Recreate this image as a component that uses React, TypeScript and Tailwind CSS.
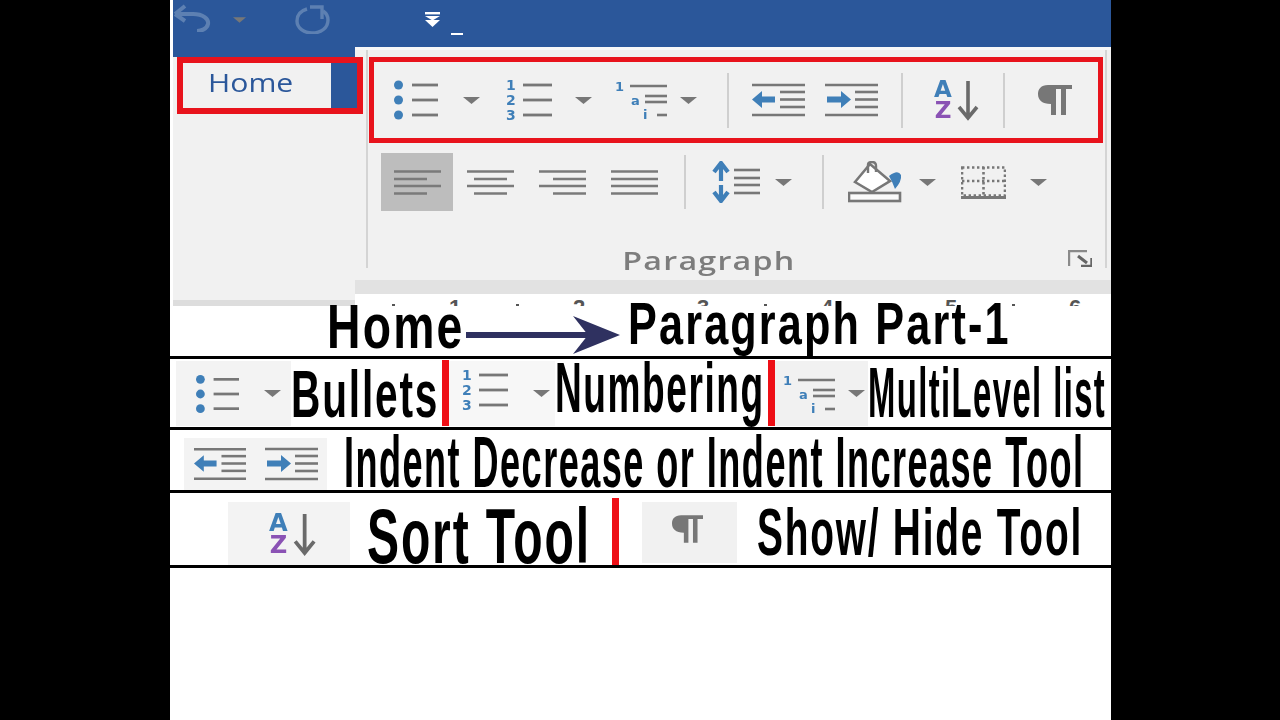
import type { ReactNode } from 'react';

const BLUE = '#3f7fb8';
const GRAY = '#777777';
const PURPLE = '#8a52b4';
const ICON_FONT = "'DejaVu Sans', sans-serif";

type IconProps = { className: string };

function Caret({ className = 'w-[17px] h-[7px]' }: { className?: string }) {
  return (
    <svg viewBox="0 0 17 7" className={`shrink-0 ${className}`}>
      <polygon points="0,0 17,0 8.5,7" fill="#777" />
    </svg>
  );
}

function Separator({ className }: IconProps) {
  return <div className={`w-[2px] shrink-0 bg-[#cfcfcf] ${className}`} />;
}

function Bullets({ className }: IconProps) {
  return (
    <svg viewBox="0 0 44 36" className={`shrink-0 overflow-visible ${className}`}>
      {[3, 18, 33].map((y) => (
        <g key={y}>
          <circle cx="4.5" cy={y} r="4.5" fill={BLUE} />
          <line x1="18" x2="44" y1={y} y2={y} stroke={GRAY} strokeWidth="2.8" />
        </g>
      ))}
    </svg>
  );
}

function Numbers({ className }: IconProps) {
  return (
    <svg viewBox="0 0 47 36" className={`shrink-0 overflow-visible ${className}`}>
      {[
        ['1', 3],
        ['2', 18],
        ['3', 33],
      ].map(([n, y]) => (
        <g key={n}>
          <text x="1" y={Number(y) + 5} fontSize="14" fontWeight="700" fontFamily={ICON_FONT} fill={BLUE}>
            {n}
          </text>
          <line x1="18" x2="47" y1={y} y2={y} stroke={GRAY} strokeWidth="2.8" />
        </g>
      ))}
    </svg>
  );
}

function Multi({ className }: IconProps) {
  return (
    <svg viewBox="0 0 55 38" className={`shrink-0 overflow-visible ${className}`}>
      <g fontSize="13" fontWeight="700" fontFamily={ICON_FONT} fill={BLUE}>
        <text x="0" y="10">1</text>
        <text x="16" y="24">a</text>
        <text x="28" y="38">i</text>
      </g>
      <g stroke={GRAY} strokeWidth="2.6">
        <line x1="15" x2="52" y1="5" y2="5" />
        <line x1="30" x2="52" y1="15" y2="15" />
        <line x1="30" x2="52" y1="21" y2="21" />
        <line x1="42" x2="52" y1="34" y2="34" />
      </g>
    </svg>
  );
}

function Outdent({ className }: IconProps) {
  return (
    <svg viewBox="0 0 53 34" className={`shrink-0 ${className}`}>
      <g stroke={GRAY} strokeWidth="2.6">
        <line x1="0" x2="53" y1="2" y2="2" />
        <line x1="28" x2="53" y1="9" y2="9" />
        <line x1="28" x2="53" y1="16.5" y2="16.5" />
        <line x1="28" x2="53" y1="24" y2="24" />
        <line x1="0" x2="53" y1="32" y2="32" />
      </g>
      <path d="M0 16.5 L10 8 V13.5 H23 V19.5 H10 V25 Z" fill={BLUE} />
    </svg>
  );
}

function Indent({ className }: IconProps) {
  return (
    <svg viewBox="0 0 53 34" className={`shrink-0 ${className}`}>
      <g stroke={GRAY} strokeWidth="2.6">
        <line x1="0" x2="53" y1="2" y2="2" />
        <line x1="30" x2="53" y1="9" y2="9" />
        <line x1="30" x2="53" y1="16.5" y2="16.5" />
        <line x1="30" x2="53" y1="24" y2="24" />
        <line x1="0" x2="53" y1="32" y2="32" />
      </g>
      <path d="M26 16.5 L16 8 V13.5 H2 V19.5 H16 V25 Z" fill={BLUE} />
    </svg>
  );
}

function Sort({ className }: IconProps) {
  return (
    <svg viewBox="0 0 46 40" className={`shrink-0 overflow-visible ${className}`}>
      <g fontSize="23" fontWeight="700" fontFamily={ICON_FONT} textAnchor="middle">
        <text x="11" y="17" fill={BLUE}>A</text>
        <text x="11" y="38" fill={PURPLE}>Z</text>
      </g>
      <path d="M36 1 V37 M27 27 L36 38 L45 27" fill="none" stroke="#6a6a6a" strokeWidth="3.6" />
    </svg>
  );
}

function Pilcrow({ className }: IconProps) {
  return (
    <svg viewBox="0 0 34 32" className={`shrink-0 ${className}`}>
      <path d="M34 1 H10 C3 1 0 5 0 10 C0 16 4 20 13 20 V31 H18 V5 H23 V31 H28 V5 H34 Z" fill="#777" />
    </svg>
  );
}

function Align({ mode }: { mode: 'left' | 'center' | 'right' | 'justify' }) {
  const short = {
    left: [0, 33],
    center: [7, 40],
    right: [14, 47],
    justify: [0, 47],
  }[mode];
  return (
    <svg viewBox="0 0 47 25" className="w-[47px] h-[25px] shrink-0">
      <g stroke="#7a7a7a" strokeWidth="2.6">
        <line x1="0" x2="47" y1="1.5" y2="1.5" />
        <line x1={short[0]} x2={short[1]} y1="9" y2="9" />
        <line x1="0" x2="47" y1="16" y2="16" />
        <line x1={short[0]} x2={short[1]} y1="23.5" y2="23.5" />
      </g>
    </svg>
  );
}

function LineSpacing() {
  return (
    <svg viewBox="0 0 48 42" className="w-[48px] h-[42px] shrink-0">
      <path d="M9 20 V3 M2 11 L9 2 L16 11 M9 24 V39 M2 31 L9 40 L16 31" fill="none" stroke={BLUE} strokeWidth="4.2" />
      <g stroke={GRAY} strokeWidth="2.6">
        <line x1="22" x2="48" y1="9" y2="9" />
        <line x1="22" x2="48" y1="17" y2="17" />
        <line x1="22" x2="48" y1="24" y2="24" />
        <line x1="22" x2="48" y1="32" y2="32" />
      </g>
    </svg>
  );
}

function Shading() {
  return (
    <svg viewBox="0 0 54 42" className="w-[54px] h-[42px] shrink-0">
      <path d="M7 21 L22 3 L42 20 L24 31 Z" fill="#fff" stroke={GRAY} strokeWidth="2.6" />
      <path d="M20 12 V4 Q20 1 24 1 Q28 1 28 5 V11" fill="none" stroke={GRAY} strokeWidth="2.4" />
      <path d="M41 15 Q50 8 53 14 Q54 20 47 28 Q44 20 41 15 Z" fill={BLUE} />
      <rect x="1" y="32" width="51" height="8" fill="#fafafa" stroke={GRAY} strokeWidth="2.6" />
    </svg>
  );
}

function Borders() {
  return (
    <svg viewBox="0 0 45 33" className="w-[45px] h-[33px] shrink-0">
      <g stroke="#777" strokeWidth="2.6" strokeDasharray="2.4 2.6" fill="none">
        <rect x="1" y="1.5" width="43" height="28" />
        <line x1="1" x2="44" y1="15" y2="15" />
        <line x1="22.5" x2="22.5" y1="1" y2="30" />
      </g>
      <line x1="0" x2="45" y1="31.5" y2="31.5" stroke="#777" strokeWidth="3" />
    </svg>
  );
}

function Launcher() {
  return (
    <svg viewBox="0 0 24 17" className="w-[24px] h-[17px] shrink-0">
      <path d="M1 16 V1 H19" fill="none" stroke="#8a8a8a" strokeWidth="2.4" />
      <path d="M10 6 L19 13" fill="none" stroke="#666" strokeWidth="3" />
      <path d="M13 16.5 H24 V8" fill="none" stroke="#666" strokeWidth="3.4" />
    </svg>
  );
}

function Undo() {
  return (
    <svg viewBox="0 0 38 28" className="w-[38px] h-[28px] shrink-0">
      <path d="M2 10 L12 2 M2 10 L12 17 M2 10 H20 C30 10 36 15 35 20 C34 25 28 27 24 27" fill="none" stroke="#5d80b2" strokeWidth="4" />
    </svg>
  );
}

function Redo() {
  return (
    <svg viewBox="0 0 36 30" className="w-[36px] h-[30px] shrink-0">
      <path d="M12 5 C5 7 2 12 2 17 C2 24 9 29 17 29 C26 29 33 24 33 16 C33 12 31 9 28 7" fill="none" stroke="#5d80b2" strokeWidth="3.4" />
      <path d="M15 3 H27 V15" fill="none" stroke="#5d80b2" strokeWidth="3.4" />
    </svg>
  );
}

function Customize() {
  return (
    <svg viewBox="0 0 15 16" className="w-[15px] h-[16px] shrink-0">
      <rect x="0" y="1" width="15" height="2.4" fill="#fff" />
      <polygon points="0,5 15,5 7.5,9.5" fill="#fff" />
      <polygon points="0,9 15,9 7.5,16" fill="#fff" />
    </svg>
  );
}

function Label({ box, text, children }: { box: string; text: string; children: ReactNode }) {
  return (
    <div className={`shrink-0 ${box}`}>
      <span className={`block origin-left whitespace-nowrap font-['Liberation_Sans',sans-serif] font-bold leading-none tracking-[3px] text-black ${text}`}>
        {children}
      </span>
    </div>
  );
}

function RedDivider({ className }: IconProps) {
  return <div className={`w-[7px] shrink-0 bg-[#ee0f16] ${className}`} />;
}

const rulerMarks = ['', '1', '', '2', '', '3', '', '4', '', '5', '', '6'];

function Ruler() {
  return (
    <div className="flex h-[12px] overflow-hidden bg-white pl-[7px] pt-[3px]">
      {rulerMarks.map((mark, i) => (
        <div key={i} className="w-[62px] shrink-0 text-center font-['Liberation_Sans',sans-serif] text-[22px] font-bold leading-none text-[#555]">
          {mark || <div className="mx-auto mt-[7px] h-[2px] w-[3px] bg-[#555]" />}
        </div>
      ))}
    </div>
  );
}

function Ribbon() {
  return (
    <div className="relative flex h-[306px]">
      <div className="ml-[3px] flex w-[182px] shrink-0 flex-col">
        <div className="flex h-[57px] items-start bg-[#2b579a] pt-[4px]">
          <Undo />
          <div className="ml-[22px] mt-[13px]">
            <Caret className="w-[13px] h-[6px]" />
          </div>
          <div className="ml-[49px]">
            <Redo />
          </div>
        </div>
        <div className="flex-1 bg-[#f1f1f1]" />
        <div className="h-[6px] bg-[#dddddd]" />
      </div>

      {/* red highlight around the Home tab */}
      <div className="absolute left-[7px] top-[57px] flex h-[57px] w-[186px] border-[6px] border-[#e8131c] bg-[#f1f1f1]">
        <div className="flex-1 pl-[25px] pt-[4px] font-['Open_Sans',sans-serif] text-[26px] font-medium leading-[30px] text-[#2b579a]">
          <span className="inline-block origin-left scale-x-[1.16]">Home</span>
        </div>
        <div className="w-[26px] bg-[#2b579a]" />
      </div>

      <div className="flex w-[756px] shrink-0 flex-col">
        <div className="flex h-[47px] items-start bg-[#2b579a] pl-[70px] pt-[11px]">
          <Customize />
          <div className="ml-[11px] mt-[22px] h-[2px] w-[12px] bg-white" />
        </div>
        <div className="h-[3px] bg-[#f8f8f8]" />
        <div className="h-[230px] bg-[#f1f1f1] pl-[11px]">
          <div className="h-[218px] w-[741px] border-x-2 border-[#d4d4d4] pt-[7px]">
            <div className="ml-[1px] flex h-[86px] w-[734px] items-center border-[5px] border-[#e8131c]">
              <div className="flex items-center blur-[0.4px]">
                <Bullets className="ml-[20px] w-[44px] h-[36px]" />
                <div className="ml-[25px]"><Caret /></div>
                <Numbers className="ml-[25px] w-[47px] h-[36px]" />
                <div className="ml-[23px]"><Caret /></div>
                <Multi className="ml-[23px] w-[55px] h-[38px]" />
                <div className="ml-[10px]"><Caret /></div>
                <Separator className="ml-[30px] h-[55px]" />
                <Outdent className="ml-[23px] w-[53px] h-[34px]" />
                <Indent className="ml-[20px] w-[53px] h-[34px]" />
                <Separator className="ml-[23px] h-[55px]" />
                <Sort className="ml-[29px] w-[46px] h-[40px]" />
                <Separator className="ml-[25px] h-[55px]" />
                <Pilcrow className="ml-[33px] w-[34px] h-[32px]" />
              </div>
            </div>

            <div className="ml-[13px] mt-[10px] flex h-[58px] items-center blur-[0.4px]">
              <div className="flex h-[58px] w-[72px] items-center justify-center bg-[#bdbdbd]">
                <Align mode="left" />
              </div>
              <div className="ml-[14px]"><Align mode="center" /></div>
              <div className="ml-[25px]"><Align mode="right" /></div>
              <div className="ml-[25px]"><Align mode="justify" /></div>
              <Separator className="ml-[26px] h-[54px]" />
              <div className="ml-[26px]"><LineSpacing /></div>
              <div className="ml-[15px]"><Caret /></div>
              <Separator className="ml-[30px] h-[54px]" />
              <div className="ml-[24px]"><Shading /></div>
              <div className="ml-[17px]"><Caret /></div>
              <div className="ml-[25px]"><Borders /></div>
              <div className="ml-[24px]"><Caret /></div>
            </div>

            <div className="ml-[254px] mt-[36px] flex h-[26px] items-start">
              <div className="w-[173px] shrink-0 text-center font-['Open_Sans',sans-serif] text-[26px] font-semibold leading-[26px] tracking-[1px] text-[#7d7d7d]">
                <span className="inline-block scale-x-[1.24]">Paragraph</span>
              </div>
              <div className="ml-[273px] mt-[3px]"><Launcher /></div>
            </div>
          </div>
        </div>
        <div className="h-[14px] bg-[#e2e2e2]" />
        <Ruler />
      </div>
    </div>
  );
}

function HeadingRow() {
  return (
    <div className="relative flex h-[53px] items-start border-b-[3px] border-black">
      <Label box="ml-[157px] -mt-[11px] w-[136px]" text="text-[63px] scale-x-[0.735]">Home</Label>
      <svg viewBox="0 0 154 38" className="ml-[3px] mt-[10px] h-[38px] w-[154px] shrink-0">
        <rect x="0" y="16" width="124" height="6" fill="#2f3160" />
        <polygon points="107,0 154,19 107,38 122,19" fill="#2f3160" />
      </svg>
      <Label box="ml-[8px] -mt-[12px] w-[382px]" text="text-[60px] scale-x-[0.72]">Paragraph Part-1</Label>
    </div>
  );
}

function ListRow() {
  return (
    <div className="relative flex h-[71px] items-start border-b-[3px] border-black">
      <div className="ml-[6px] mt-[2px] flex h-[65px] w-[115px] shrink-0 items-center bg-[#f3f3f3] blur-[0.3px]">
        <Bullets className="ml-[20px] w-[43px] h-[36px]" />
        <div className="ml-[25px]"><Caret /></div>
      </div>
      <Label box="mt-[2px] w-[151px]" text="text-[66px] scale-x-[0.615]">Bullets</Label>
      <RedDivider className="mt-[1px] h-[66px]" />
      <div className="mt-[2px] flex h-[65px] w-[106px] shrink-0 items-center bg-[#f7f7f7] blur-[0.3px]">
        <Numbers className="ml-[12px] mb-[8px] w-[47px] h-[36px]" />
        <div className="ml-[25px]"><Caret /></div>
      </div>
      <Label box="-mt-[6px] w-[213px]" text="text-[70px] scale-x-[0.529]">Numbering</Label>
      <RedDivider className="mt-[1px] h-[66px]" />
      <div className="mt-[2px] flex h-[65px] w-[93px] shrink-0 items-center bg-[#f1f1f1] blur-[0.3px]">
        <Multi className="ml-[8px] w-[55px] h-[38px]" />
        <div className="ml-[10px]"><Caret /></div>
      </div>
      <Label box="-mt-[1px] w-[238px]" text="text-[70px] scale-x-[0.469]">MultiLevel list</Label>
    </div>
  );
}

function IndentRow() {
  return (
    <div className="relative flex h-[63px] items-start border-b-[3px] border-black">
      <div className="ml-[14px] mt-[8px] flex h-[52px] w-[143px] shrink-0 items-center bg-[#f3f3f3] blur-[0.3px]">
        <Outdent className="ml-[10px] w-[52px] h-[34px]" />
        <Indent className="ml-[19px] w-[53px] h-[34px]" />
      </div>
      <Label box="ml-[17px] -mt-[5px] w-[739px]" text="text-[73px] scale-x-[0.494]">
        Indent Decrease or Indent Increase Tool
      </Label>
    </div>
  );
}

function SortRow() {
  return (
    <div className="relative flex h-[75px] items-start border-b-[3px] border-black">
      <div className="ml-[58px] mt-[9px] flex h-[63px] w-[122px] shrink-0 items-center bg-[#f3f3f3] blur-[0.3px]">
        <Sort className="ml-[34px] w-[58px] h-[42px]" />
      </div>
      <Label box="ml-[17px] mt-[4px] w-[223px]" text="text-[78px] scale-x-[0.616]">Sort Tool</Label>
      <RedDivider className="ml-[22px] mt-[5px] h-[67px]" />
      <div className="ml-[23px] mt-[9px] flex h-[61px] w-[95px] shrink-0 items-center bg-[#f1f1f1] blur-[0.3px]">
        <Pilcrow className="ml-[30px] mb-[8px] w-[31px] h-[30px]" />
      </div>
      <Label box="ml-[20px] mt-[6px] w-[324px]" text="text-[66px] scale-x-[0.589]">Show/ Hide Tool</Label>
    </div>
  );
}

export default function App() {
  return (
    <div className="h-[720px] w-[1280px] overflow-hidden bg-black pl-[170px]">
      <div className="h-[720px] w-[941px] overflow-hidden bg-white">
        <Ribbon />
        <HeadingRow />
        <ListRow />
        <IndentRow />
        <SortRow />
      </div>
    </div>
  );
}
